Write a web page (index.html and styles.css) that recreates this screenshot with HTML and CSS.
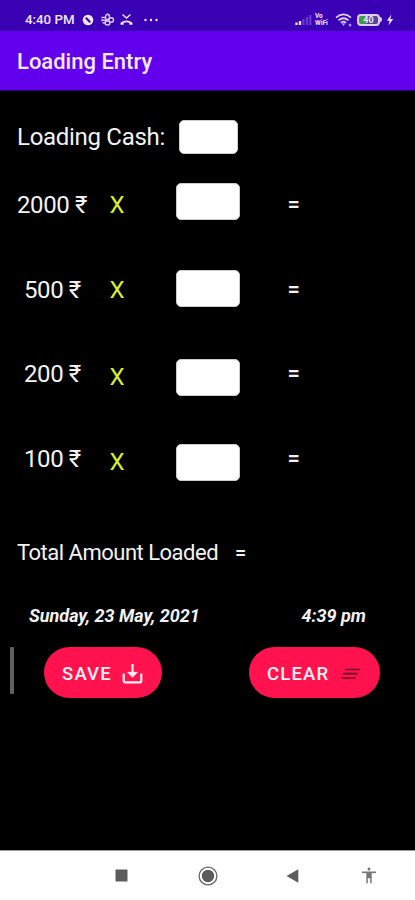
FILE: index.html
```html
<!DOCTYPE html>
<html lang="en">
<head>
    <meta charset="UTF-8">
    <meta name="viewport" content="width=device-width, initial-scale=1.0">
    <title>Loading Entry</title>
    <link rel="stylesheet" href="styles.css">
</head>
<body>
    <div class="status-bar">
        <span class="clock">4:40 PM</span>
        <svg class="status-left" width="78" height="14" viewBox="0 0 78 14">
            <circle cx="6" cy="7" r="5.3" fill="#eee6ff"/>
            <path d="M3.8 4.8l4.4 4.4" fill="none" stroke="#3b00b5" stroke-width="2"/>
            <g fill="none" stroke="#d9ccf5" stroke-width="1.4">
                <ellipse cx="25.5" cy="4" rx="2" ry="2.7"/>
                <circle cx="29.2" cy="7" r="2.3"/>
                <ellipse cx="25.5" cy="10" rx="2.4" ry="2"/>
                <path d="M19.5 4.5h4M19 7.3h6M20.5 9.8h3"/>
            </g>
            <path d="M40.5 1.5l4 3.6 4-3.6" fill="none" stroke="#eee6ff" stroke-width="1.4"/>
            <path d="M38.5 11.8v-2.1q6-4.6 12 0v2.1h-3.2V9.8q-2.8-.9-5.6 0v2z" fill="#eee6ff"/>
            <g fill="#eee6ff">
                <circle cx="63.5" cy="7" r="1.2"/>
                <circle cx="69" cy="7" r="1.2"/>
                <circle cx="74.5" cy="7" r="1.2"/>
            </g>
        </svg>
        <svg class="signal" width="17" height="12" viewBox="0 0 17 12">
            <path d="M1.5 11V8.5M5 11V7" stroke="#e8dfff" stroke-width="2.4"/>
            <path d="M8.5 11V5M12 11V3M15.3 11V1" stroke="#6a3fd0" stroke-width="2.2"/>
        </svg>
        <span class="vo-wifi"><span>Vo</span><span>WiFi</span></span>
        <svg class="wifi" width="18" height="14" viewBox="0 0 18 14">
            <g fill="none" stroke="#dccfff" stroke-width="1.7">
                <path d="M1 4.7q7.5-6.5 15 0"/>
                <path d="M3.5 7.4q5-4.3 10 0"/>
                <path d="M5.9 9.8q2.6-2.2 5.2 0"/>
            </g>
            <path d="M6.8 10.5h3.4L8.5 12.8z" fill="#dccfff"/>
            <circle cx="15" cy="12" r="1.5" fill="#a98af0"/>
        </svg>
        <span class="battery">40</span>
        <span class="battery-tip"></span>
        <svg class="bolt" width="8" height="12" viewBox="0 0 8 12">
            <path d="M5.3 .5L.8 6.7h2.7L2.5 11.5 7.3 5H4.4z" fill="#e8dfff"/>
        </svg>
    </div>
    <div class="app-bar">
        <h1>Loading Entry</h1>
    </div>
    <div class="container">
        <div class="cash">
            <label for="cash">Loading Cash:</label>
            <input type="text" id="cash">
        </div>
        <div class="row">
            <label for="n2000">2000 ₹</label>
            <span class="times">X</span>
            <input type="text" id="n2000">
            <span class="equals">=</span>
        </div>
        <div class="row row-500">
            <label for="n500">500 ₹</label>
            <span class="times">X</span>
            <input type="text" id="n500">
            <span class="equals">=</span>
        </div>
        <div class="row row-low">
            <label for="n200">200 ₹</label>
            <span class="times">X</span>
            <input type="text" id="n200">
            <span class="equals">=</span>
        </div>
        <div class="row row-low">
            <label for="n100">100 ₹</label>
            <span class="times">X</span>
            <input type="text" id="n100">
            <span class="equals">=</span>
        </div>
        <div class="total">
            <span class="total-label">Total Amount Loaded</span>
            <span class="total-equals">=</span>
        </div>
        <div class="date">
            <span class="day">Sunday, 23 May, 2021</span>
            <span class="time">4:39 pm</span>
        </div>
        <div class="buttons">
            <div class="scrollbar"></div>
            <button type="button" class="save">
                <span>SAVE</span>
                <svg width="21" height="21" viewBox="0 0 22 22" fill="none" stroke="#fff0f3">
                    <path d="M1.8 11V19q0 1.2 1.2 1.2h16q1.2 0 1.2-1.2v-8" stroke-width="2.3"/>
                    <path d="M11 1v12" stroke-width="2.2"/>
                    <path d="M6 9.8h10L11 15z" fill="#fff0f3" stroke-width=".8"/>
                </svg>
            </button>
            <button type="button" class="clear">
                <span>CLEAR</span>
                <svg width="21" height="14" viewBox="0 0 21 14" fill="none" stroke="#6d0a28" stroke-width="1.7">
                    <path d="M5 2.5h15M3 6.7h15M1 11h15"/>
                </svg>
            </button>
        </div>
    </div>
    <div class="nav-bar">
        <svg width="13" height="13" viewBox="0 0 13 13">
            <rect x=".5" y=".5" width="12" height="12" rx=".8" fill="#5c5c5c"/>
        </svg>
        <svg class="home" width="20" height="20" viewBox="0 0 20 20">
            <circle cx="10" cy="10" r="8.9" fill="none" stroke="#666" stroke-width="1.3"/>
            <circle cx="10" cy="10" r="6.2" fill="#5c5c5c"/>
        </svg>
        <svg class="back" width="13" height="14" viewBox="0 0 13 14">
            <path d="M12.3 .3v13.4L.5 7z" fill="#5c5c5c"/>
        </svg>
        <svg class="access" width="16" height="17" viewBox="0 0 16 17">
            <circle cx="8" cy="2" r="1.5" fill="#777"/>
            <path d="M1 5.3h14" stroke="#777" stroke-width="1.6"/>
            <path d="M5.3 5h5.4v11.3H9.2v-5H6.8v5H5.3z" fill="#777"/>
        </svg>
    </div>
</body>
</html>
```
FILE: styles.css
```css
* {
    box-sizing: border-box;
}
body {
    margin: 0;
    height: 900px;
    display: flex;
    flex-direction: column;
    overflow: hidden;
    font-family: Roboto, sans-serif;
    background-color: #000;
    color: #f2f2f2;
}
svg {
    display: block;
    flex: none;
}
.status-bar {
    display: flex;
    align-items: center;
    height: 31px;
    padding: 8px 0 0 25px;
    background-color: #3a00b4;
    color: #eee6ff;
}
.clock {
    width: 57px;
    font-size: 13.3px;
    font-weight: 500;
    line-height: 16px;
    white-space: nowrap;
}
.signal {
    margin-left: 135px;
}
.vo-wifi {
    display: flex;
    flex-direction: column;
    width: 15px;
    margin-left: 3px;
    font-size: 6.5px;
    font-weight: 700;
    line-height: 7px;
}
.wifi {
    margin-left: 5px;
}
.battery {
    width: 23px;
    height: 12px;
    margin-left: 4px;
    border: 2px solid #dccfff;
    border-radius: 4px;
    background: linear-gradient(to right, #3f9a48 35%, #55478f 35%);
    font-size: 9px;
    font-weight: 700;
    line-height: 8px;
    text-align: center;
}
.battery-tip {
    width: 2px;
    height: 5px;
    border-radius: 0 2px 2px 0;
    background-color: #dccfff;
}
.bolt {
    margin-left: 4px;
}
.app-bar {
    display: flex;
    align-items: center;
    height: 60px;
    padding: 2px 17px 0;
    background-color: #6200ee;
    border-bottom: 1px solid #2a0068;
}
.app-bar h1 {
    margin: 0;
    font-size: 22px;
    font-weight: 500;
    color: #f3ebff;
}
.container {
    flex: 1;
    padding-top: 29px;
    font-size: 24px;
    line-height: 28px;
}
input {
    width: 64px;
    height: 37px;
    border: 1px solid #ccc;
    border-radius: 5px;
    background-color: #fff;
}
.cash {
    display: flex;
    height: 63px;
    padding-left: 17px;
}
.cash label {
    width: 161.5px;
    padding-top: 3px;
    letter-spacing: -0.3px;
}
.cash input {
    width: 59px;
    height: 34px;
}
.row {
    display: grid;
    grid-template-columns: 92.5px 66.5px 111.5px 30px;
    align-items: start;
    height: 84.5px;
    padding-left: 17px;
}
.row label {
    padding-top: 8px;
    letter-spacing: -0.4px;
    white-space: nowrap;
}
.times {
    padding-top: 8px;
    color: #d9ee2e;
}
.equals {
    padding-top: 8px;
    font-size: 22px;
    font-weight: 500;
}
.row-500 label,
.row-low label {
    padding-left: 7px;
}
.row-500 input {
    margin-top: 2.5px;
}
.row-low input {
    margin-top: 7px;
}
.row-low .times {
    padding-top: 11px;
}
.total {
    display: flex;
    height: 65px;
    padding: 18px 0 0 17px;
}
.total-label {
    width: 218px;
    font-size: 22px;
    letter-spacing: -0.5px;
}
.total-equals {
    font-size: 20px;
    font-weight: 500;
}
.date {
    display: flex;
    height: 61px;
    padding: 16px 0 0 29px;
    font-size: 18px;
    font-style: italic;
    font-weight: 700;
}
.day {
    width: 272.5px;
}
.buttons {
    display: flex;
    height: 51px;
    padding-left: 10px;
}
.scrollbar {
    width: 4px;
    height: 47px;
    border-radius: 1px;
    background-color: #606060;
}
button {
    display: flex;
    align-items: center;
    height: 51px;
    padding: 2px 0 0 18px;
    border: none;
    border-radius: 26px;
    background-color: #ff124e;
    color: #fff0f3;
    font-family: inherit;
    font-size: 18.5px;
    font-weight: 500;
    letter-spacing: 1.2px;
    text-align: left;
    cursor: pointer;
}
.save {
    width: 118px;
    margin-left: 30px;
}
.save span {
    width: 60px;
}
.clear {
    width: 131px;
    margin-left: 87px;
}
.clear span {
    width: 73px;
}
.nav-bar {
    display: flex;
    align-items: center;
    height: 50px;
    padding-left: 115px;
    border-top: 1px solid #999;
    background-color: #fff;
}
.home {
    margin-left: 70px;
}
.back {
    margin-left: 68px;
}
.access {
    margin-left: 62px;
}
```
